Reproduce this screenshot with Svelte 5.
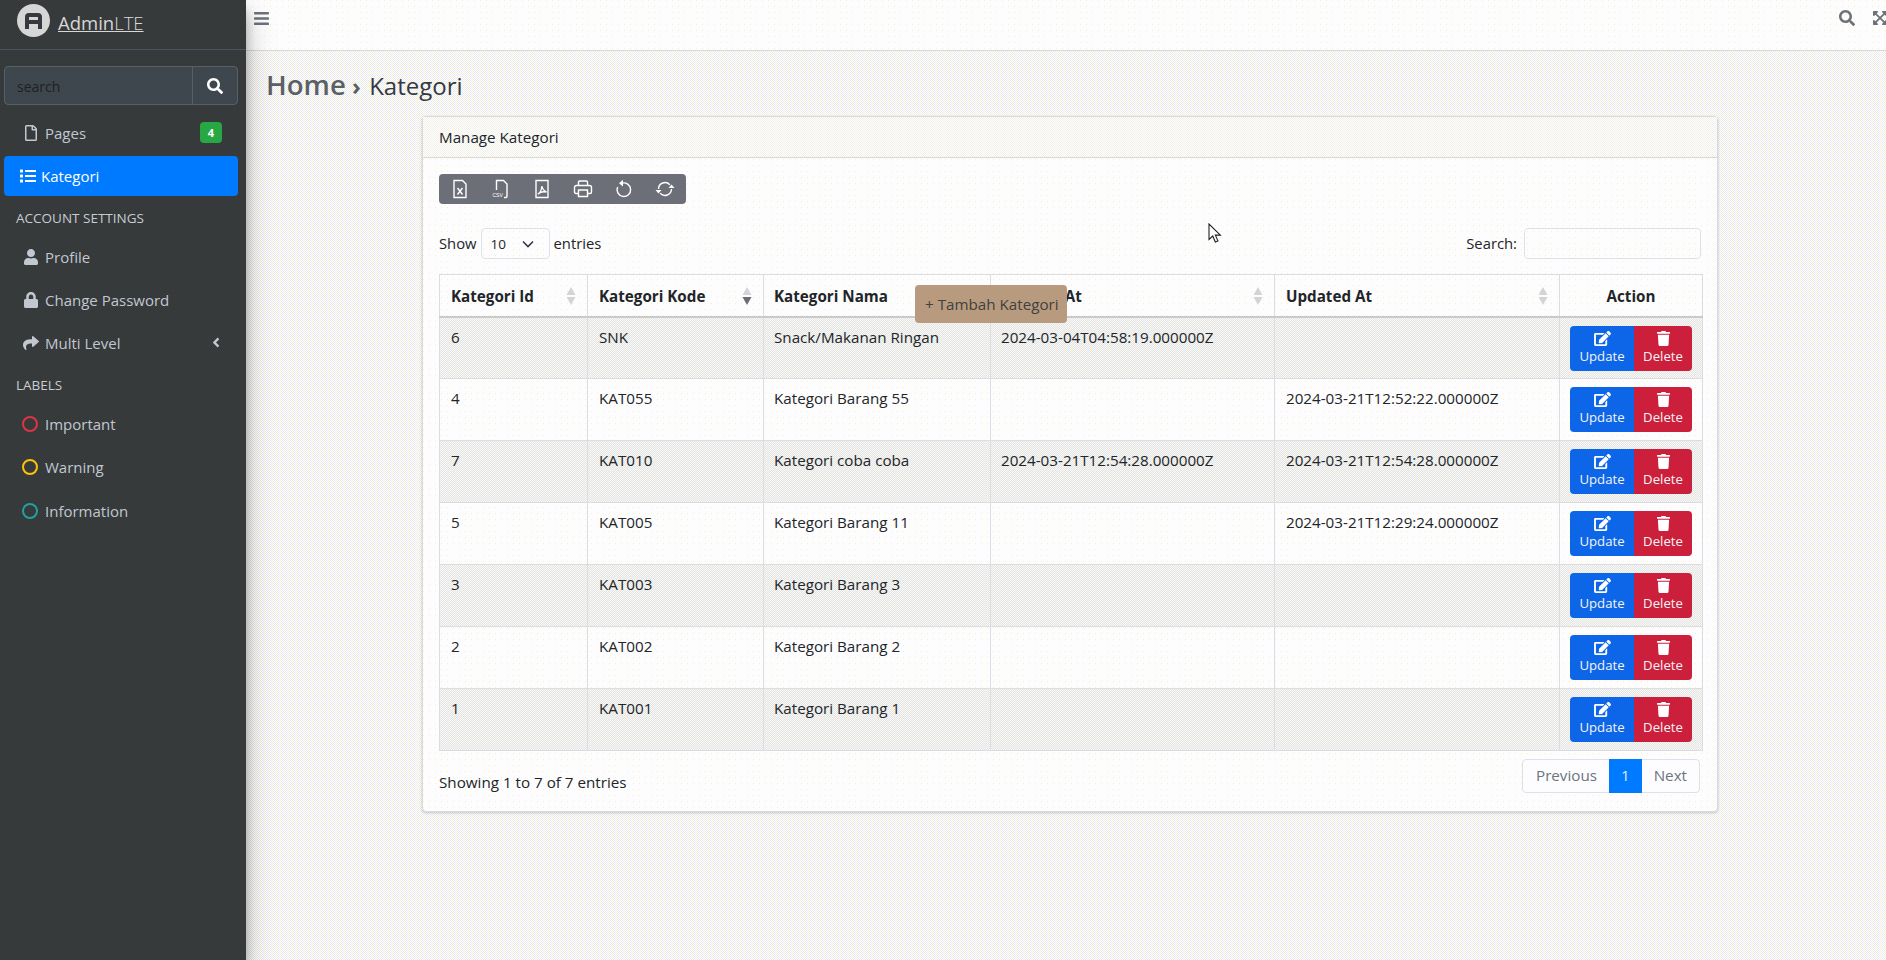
<script>
  const paths = {
    search: [512, 'M505 442.7L405.3 343c-4.5-4.5-10.6-7-17-7H372c27.6-35.3 44-79.7 44-128C416 93.1 322.9 0 208 0S0 93.1 0 208s93.1 208 208 208c48.3 0 92.7-16.4 128-44v16.3c0 6.4 2.5 12.5 7 17l99.7 99.7c9.4 9.4 24.6 9.4 33.9 0l28.3-28.3c9.4-9.4 9.4-24.6.1-34zM208 336c-70.7 0-128-57.2-128-128 0-70.7 57.2-128 128-128 70.7 0 128 57.2 128 128 0 70.7-57.2 128-128 128z'],
    bars: [448, 'M16 132h416c8.837 0 16-7.163 16-16V76c0-8.837-7.163-16-16-16H16C7.163 60 0 67.163 0 76v40c0 8.837 7.163 16 16 16zm0 160h416c8.837 0 16-7.163 16-16v-40c0-8.837-7.163-16-16-16H16c-8.837 0-16 7.163-16 16v40c0 8.837 7.163 16 16 16zm0 160h416c8.837 0 16-7.163 16-16v-40c0-8.837-7.163-16-16-16H16c-8.837 0-16 7.163-16 16v40c0 8.837 7.163 16 16 16z'],
    expand: [448, 'M448 344v112a23.94 23.94 0 0 1-24 24H312c-21.39 0-32.09-25.9-17-41l36.2-36.2L224 295.6 116.77 402.9 153 439c15.09 15.1 4.39 41-17 41H24a23.94 23.94 0 0 1-24-24V344c0-21.4 25.89-32.1 41-17l36.19 36.2L184.46 256 77.18 148.7 41 185c-15.1 15.1-41 4.4-41-17V56a23.94 23.94 0 0 1 24-24h112c21.39 0 32.09 25.9 17 41l-36.2 36.2L224 216.4l107.23-107.3L295 73c-15.09-15.1-4.39-41 17-41h112a23.94 23.94 0 0 1 24 24v112c0 21.4-25.89 32.1-41 17l-36.19-36.2L263.54 256l107.28 107.3L407 327.1c15.1-15.2 41-4.5 41 16.9z'],
    user: [448, 'M224 256c70.7 0 128-57.3 128-128S294.7 0 224 0 96 57.3 96 128s57.3 128 128 128zm89.6 32h-16.7c-22.2 10.2-46.9 16-72.9 16s-50.6-5.8-72.9-16h-16.7C60.2 288 0 348.2 0 422.4V464c0 26.5 21.5 48 48 48h352c26.5 0 48-21.5 48-48v-41.6c0-74.2-60.2-134.4-134.4-134.4z'],
    lock: [448, 'M400 224h-24v-72C376 68.2 307.8 0 224 0S72 68.2 72 152v72H48c-26.5 0-48 21.5-48 48v192c0 26.5 21.5 48 48 48h352c26.5 0 48-21.5 48-48V272c0-26.5-21.5-48-48-48zm-104 0H152v-72c0-39.7 32.3-72 72-72s72 32.3 72 72v72z'],
    share: [512, 'M503.691 189.836L327.687 37.851C312.281 24.546 288 35.347 288 56.015v80.053C127.371 137.907 0 170.1 0 322.326c0 61.441 39.581 122.309 83.333 154.132 13.653 9.931 33.111-2.533 28.077-18.631C66.066 312.814 132.917 274.316 288 272.085V360c0 20.7 24.3 31.453 39.687 18.164l176.004-152c11.071-9.562 11.086-26.753 0-36.328z'],
    angle: [256, 'M31.7 239l136-136c9.4-9.4 24.6-9.4 33.9 0l22.6 22.6c9.4 9.4 9.4 24.6 0 33.9L127.9 256l96.4 96.4c9.4 9.4 9.4 24.6 0 33.9L201.7 409c-9.4 9.4-24.6 9.4-33.9 0l-136-136c-9.5-9.4-9.5-24.6-.1-34z'],
    list: [512, 'M80 368H16a16 16 0 0 0-16 16v64a16 16 0 0 0 16 16h64a16 16 0 0 0 16-16v-64a16 16 0 0 0-16-16zm0-320H16A16 16 0 0 0 0 64v64a16 16 0 0 0 16 16h64a16 16 0 0 0 16-16V64a16 16 0 0 0-16-16zm0 160H16a16 16 0 0 0-16 16v64a16 16 0 0 0 16 16h64a16 16 0 0 0 16-16v-64a16 16 0 0 0-16-16zm416 176H176a16 16 0 0 0-16 16v32a16 16 0 0 0 16 16h320a16 16 0 0 0 16-16v-32a16 16 0 0 0-16-16zm0-320H176a16 16 0 0 0-16 16v32a16 16 0 0 0 16 16h320a16 16 0 0 0 16-16V80a16 16 0 0 0-16-16zm0 160H176a16 16 0 0 0-16 16v32a16 16 0 0 0 16 16h320a16 16 0 0 0 16-16v-32a16 16 0 0 0-16-16z'],
    trash: [448, 'M432 32H312l-9.4-18.7A24 24 0 0 0 281.1 0H166.8a23.72 23.72 0 0 0-21.4 13.3L136 32H16A16 16 0 0 0 0 48v32a16 16 0 0 0 16 16h416a16 16 0 0 0 16-16V48a16 16 0 0 0-16-16zM53.2 467a48 48 0 0 0 47.9 45h245.8a48 48 0 0 0 47.9-45L416 128H32z'],
    edit: [576, 'M402.6 83.2l90.2 90.2c3.8 3.8 3.8 10 0 13.8L274.4 405.6l-92.8 10.3c-12.4 1.4-22.9-9.1-21.5-21.5l10.3-92.8L388.8 83.2c3.8-3.8 10-3.8 13.8 0zm162-22.9l-48.8-48.8c-15.2-15.2-39.9-15.2-55.2 0l-35.4 35.4c-3.8 3.8-3.8 10 0 13.8l90.2 90.2c3.8 3.8 10 3.8 13.8 0l35.4-35.4c15.2-15.3 15.2-40 0-55.2zM384 346.2V448H64V128h229.8c3.2 0 6.2-1.3 8.5-3.5l40-40c7.6-7.6 2.2-20.5-8.5-20.5H48C21.5 64 0 85.5 0 112v352c0 26.5 21.5 48 48 48h352c26.5 0 48-21.5 48-48V306.2c0-10.7-12.9-16-20.5-8.5l-40 40c-2.2 2.3-3.5 5.3-3.5 8.5z'],
    file: [384, 'M369.9 97.9L286 14C277 5 264.8-.1 252.1-.1H48C21.5 0 0 21.5 0 48v416c0 26.5 21.5 48 48 48h288c26.5 0 48-21.5 48-48V131.9c0-12.7-5.1-25-14.1-34zM332.1 128H256V51.9l76.1 76.1zM48 464V48h160v104c0 13.3 10.7 24 24 24h104v288H48z']
  };

  const rows = [
    { id: 6, kode: 'SNK', nama: 'Snack/Makanan Ringan', created: '2024-03-04T04:58:19.000000Z', updated: '' },
    { id: 4, kode: 'KAT055', nama: 'Kategori Barang 55', created: '', updated: '2024-03-21T12:52:22.000000Z' },
    { id: 7, kode: 'KAT010', nama: 'Kategori coba coba', created: '2024-03-21T12:54:28.000000Z', updated: '2024-03-21T12:54:28.000000Z' },
    { id: 5, kode: 'KAT005', nama: 'Kategori Barang 11', created: '', updated: '2024-03-21T12:29:24.000000Z' },
    { id: 3, kode: 'KAT003', nama: 'Kategori Barang 3', created: '', updated: '' },
    { id: 2, kode: 'KAT002', nama: 'Kategori Barang 2', created: '', updated: '' },
    { id: 1, kode: 'KAT001', nama: 'Kategori Barang 1', created: '', updated: '' }
  ];

  const columns = [
    { label: 'Kategori Id' },
    { label: 'Kategori Kode', sorted: true },
    { label: 'Kategori Nama' },
    { label: 'Created At' },
    { label: 'Updated At' }
  ];
</script>

{#snippet fa(name, cls)}
  <svg class={cls} viewBox="0 0 {paths[name][0]} 512" aria-hidden="true"><path fill="currentColor" d={paths[name][1]} /></svg>
{/snippet}

{#snippet sortIcon(active)}
  <svg class="sort" class:active viewBox="0 0 10 18" aria-hidden="true">
    <path class="up" d="M5 0l4.500 8h-9z" />
    <path class="down" d="M5 18l-4.500-8h9z" />
  </svg>
{/snippet}

<div class="layout">
  <aside class="sidebar">
    <div class="brand">
      <svg class="logo" viewBox="0 0 33 33" aria-hidden="true">
        <circle cx="16.5" cy="16.5" r="16.5" fill="#d6d6d6" />
        <path fill="#343a40" fill-rule="evenodd" d="M12 9h9a4 4 0 0 1 4 4v12h-4v-5h-9v5H8V13a4 4 0 0 1 4-4zm0 4v3h9v-3z" />
      </svg>
      <span class="brand-text">Admin<span class="light">LTE</span></span>
    </div>

    <div class="side-search">
      <span class="side-placeholder">search</span>
      <span class="side-search-btn">{@render fa('search', 'ic-search')}</span>
    </div>

    <nav class="nav">
      <div class="item">
        {@render fa('file', 'ic')}<span>Pages</span><span class="badge">4</span>
      </div>
      <div class="item active">
        {@render fa('list', 'ic-list')}<span>Kategori</span>
      </div>
      <div class="nav-head">ACCOUNT SETTINGS</div>
      <div class="item">{@render fa('user', 'ic')}<span>Profile</span></div>
      <div class="item">{@render fa('lock', 'ic')}<span>Change Password</span></div>
      <div class="item">
        {@render fa('share', 'ic')}<span>Multi Level</span>{@render fa('angle', 'ic-angle')}
      </div>
      <div class="nav-head">LABELS</div>
      <div class="item"><i class="ring red"></i><span>Important</span></div>
      <div class="item"><i class="ring yellow"></i><span>Warning</span></div>
      <div class="item"><i class="ring teal"></i><span>Information</span></div>
    </nav>
  </aside>

  <div class="main">
    <header class="navbar">
      {@render fa('bars', 'ic-bars')}
      <div class="nav-right">
        {@render fa('search', 'ic-top')}
        {@render fa('expand', 'ic-top')}
      </div>
    </header>

    <div class="content">
      <h1 class="title"><span class="home">Home</span> <span class="chev">›</span> <span class="page">Kategori</span></h1>

      <section class="card">
        <div class="card-head">Manage Kategori</div>
        <div class="card-body">
          <div class="toolbar">
            <svg viewBox="0 0 20 20" class="tool" aria-hidden="true">
              <path d="M4 1.500h8.500l3.500 3.500v13.500H4z" /><path d="M7.500 9l5 6.500M12.500 9l-5 6.500" />
            </svg>
            <svg viewBox="0 0 20 20" class="tool" aria-hidden="true">
              <path d="M5.500 11V1.500h7l3.500 3.500v12.500a1 1 0 0 1-1 1h-2" />
              <text x="1.500" y="18" class="tool-text">CSV</text>
            </svg>
            <svg viewBox="0 0 20 20" class="tool" aria-hidden="true">
              <path d="M4 1.500h12v17H4z" /><path d="M6 15c2-1 3.500-4 4-8 .5 3 2 5 4.500 6-2.500-.5-6-.5-8.500 2z" />
            </svg>
            <svg viewBox="0 0 20 20" class="tool" aria-hidden="true">
              <path d="M5.500 6.500V3a1 1 0 0 1 1-1h7a1 1 0 0 1 1 1v3.500M5 14.500H3a1.500 1.500 0 0 1-1.500-1.500V8.500A2 2 0 0 1 3.500 6.500h13a2 2 0 0 1 2 2V13a1.500 1.500 0 0 1-1.500 1.500h-2" /><path d="M5.500 11h9v6.500h-9z" />
            </svg>
            <svg viewBox="0 0 20 20" class="tool" aria-hidden="true">
              <path d="M7.800 4.200A6.800 6.800 0 1 1 3.600 8" /><path fill="#fff" stroke="none" d="M9 .8v6.800L5 4.200z" />
            </svg>
            <svg viewBox="0 0 20 20" class="tool" aria-hidden="true">
              <path d="M3.500 10a6.500 6.500 0 0 1 11.300-4.300M16.500 10a6.500 6.500 0 0 1-11.300 4.300" />
              <path fill="#fff" stroke="none" d="M19.500 9h-6l3-3.600zM.5 11h6l-3 3.600z" />
            </svg>
          </div>

          <div class="table-top">
            <div class="length">
              <span class="lbl">Show</span>
              <span class="select">10<svg viewBox="0 0 12 8" class="caret" aria-hidden="true"><path d="M1 1.500l5 5 5-5" /></svg></span>
              <span class="lbl">entries</span>
            </div>
            <div class="filter">
              <span class="lbl">Search:</span>
              <span class="input"></span>
            </div>
          </div>

          <table>
            <thead>
              <tr>
                {#each columns as col}
                  <th><span class="th-in">{col.label}{@render sortIcon(col.sorted)}</span></th>
                {/each}
                <th class="action-head">Action</th>
              </tr>
            </thead>
            <tbody>
              {#each rows as row}
                <tr>
                  <td>{row.id}</td>
                  <td>{row.kode}</td>
                  <td>{row.nama}</td>
                  <td>{row.created}</td>
                  <td>{row.updated}</td>
                  <td class="actions">
                    <div class="btn-group">
                      <span class="btn blue">{@render fa('edit', 'ic-btn')}<span>Update</span></span>
                      <span class="btn red-btn">{@render fa('trash', 'ic-btn')}<span>Delete</span></span>
                    </div>
                  </td>
                </tr>
              {/each}
            </tbody>
          </table>

          <div class="table-foot">
            <span>Showing 1 to 7 of 7 entries</span>
            <div class="pager">
              <span class="pg first">Previous</span>
              <span class="pg current">1</span>
              <span class="pg">Next</span>
            </div>
          </div>
        </div>
      </section>
    </div>
  </div>

  <span class="tambah">+ Tambah Kategori</span>
  <svg class="cursor" viewBox="0 0 14 22" aria-hidden="true">
    <path fill="#fff" stroke="#222" stroke-width="1.100" d="M1 1v15.500l3.800-3.500 2.500 6 2.600-1.100-2.500-5.800h5z" />
  </svg>
</div>

<style>
  :global(body) {
    margin: 0;
    font-family: "Open Sans", "Liberation Sans", sans-serif;
    font-size: 15px;
    color: #212529;
    overflow: hidden;
  }

  .layout {
    position: relative;
    display: flex;
    height: 960px;
    /* the reference is a dithered gif frame, so the flats carry a fine grain */
    background:
      conic-gradient(at 1px 1px, transparent 75%, #fff3a6 0) 0 0 / 4px 4px,
      repeating-conic-gradient(#ffffff 0 25%, #e9e9f0 0 50%) 0 0 / 2px 2px;
  }

  .sidebar {
    width: 246px;
    flex-shrink: 0;
    background: repeating-conic-gradient(#2f3a30 0 25%, #3d3a46 0 50%) 0 0 / 2px 2px;
    box-shadow: 0 14px 28px rgba(0, 0, 0, 0.25), 0 10px 10px rgba(0, 0, 0, 0.22);
    color: #c2c7d0;
    z-index: 1;
  }

  .brand {
    display: flex;
    align-items: center;
    gap: 8px;
    height: 50px;
    padding: 0 0 0 17px;
    box-sizing: border-box;
    border-bottom: 1px solid #4b545c;
    margin-bottom: 16px;
  }

  .logo {
    width: 33px;
    height: 33px;
    margin-top: -9px;
  }

  .brand-text {
    font-size: 18.5px;
    color: #d8d8d8;
    text-decoration: underline;
    margin-top: -4px;
  }

  .light {
    font-weight: 300;
  }

  .side-search {
    display: flex;
    height: 39px;
    margin: 0 8px 8px 4px;
    background: #3f474e;
    border: 1px solid #56606a;
    border-radius: 4px;
    box-sizing: border-box;
  }

  .side-placeholder {
    flex: 1;
    padding: 10px 12px 8px;
    font-size: 14px;
    color: #1e2124;
    line-height: 20px;
  }

  .side-search-btn {
    width: 44px;
    display: flex;
    align-items: center;
    justify-content: center;
    border-left: 1px solid #56606a;
    color: #fff;
  }

  .ic-search {
    width: 16px;
    height: 16px;
  }

  .nav {
    display: flex;
    flex-direction: column;
    gap: 2px;
    margin: 0 8px 0 4px;
  }

  .item {
    display: flex;
    align-items: center;
    height: 41px;
    padding: 0 16px 0 18px;
    border-radius: 4px;
    font-size: 15px;
    color: #c2c7d0;
  }

  .item:first-child {
    height: 39px;
    margin-bottom: 2px;
  }

  .item:last-child {
    margin-top: 1px;
  }

  .item.active {
    height: 40px;
    padding-left: 16px;
    background: #007bff;
    color: #fff;
  }

  .ic {
    width: 18px;
    height: 16px;
    margin-right: 5px;
    flex-shrink: 0;
  }

  .ic-list {
    width: 16px;
    height: 16px;
    margin-right: 5px;
  }

  .badge {
    margin-left: auto;
    width: 22px;
    height: 21px;
    background: #28a745;
    border-radius: 4px;
    color: #fff;
    font-size: 11px;
    font-weight: 700;
    line-height: 21px;
    text-align: center;
  }

  .ic-angle {
    margin-left: auto;
    width: 10px;
    height: 15px;
    margin-right: 1px;
  }

  .nav-head {
    padding: 11px 12px 6px;
    font-size: 13.5px;
    line-height: 19px;
    color: #c8ccd2;
  }

  .ring {
    width: 16px;
    height: 16px;
    border: 2px solid;
    border-radius: 50%;
    box-sizing: border-box;
    margin-right: 7px;
    flex-shrink: 0;
  }

  .red { color: #dc3545; }
  .yellow { color: #ffc107; }
  .teal { color: #20a0a0; }

  .main {
    flex: 1;
    min-width: 0;
  }

  .navbar {
    display: flex;
    align-items: flex-start;
    justify-content: space-between;
    height: 51px;
    box-sizing: border-box;
    padding: 10px 0 0 8px;
    background:
      conic-gradient(at 1px 1px, transparent 75%, #fff3a6 0) 0 0 / 6px 6px,
      #fdfdff;
    border-bottom: 1px solid #d6d8dc;
    color: #6d7276;
  }

  .ic-bars {
    width: 15px;
    height: 17px;
  }

  .nav-right {
    display: flex;
    gap: 17px;
    margin-right: -2px;
    color: #6d7276;
  }

  .ic-top {
    width: 16px;
    height: 16px;
  }

  .title {
    margin: 0;
    padding: 13px 0 0 20px;
    height: 52px;
    font-weight: 400;
    font-size: 24px;
    line-height: 40px;
    color: #343a40;
  }

  .home {
    font-size: 27.6px;
    font-weight: 600;
    color: #5a6066;
  }

  .chev {
    color: #5a6066;
    font-weight: 700;
    margin-right: 2px;
  }

  .card {
    width: 1296px;
    margin: 0 0 0 176px;
    box-sizing: border-box;
    background:
      conic-gradient(at 1px 1px, transparent 75%, #fff3a6 0) 0 0 / 6px 6px,
      #fdfdff;
    border: 1px solid #d8dae0;
    border-radius: 4px;
    box-shadow: 0 1px 3px rgba(0, 0, 0, 0.2);
  }

  .card-head {
    height: 41px;
    box-sizing: border-box;
    padding: 0 16px;
    line-height: 40px;
    font-size: 15.2px;
    background: repeating-conic-gradient(#ffffff 0 25%, #f0f0e8 0 50%) 0 0 / 2px 2px;
    border-bottom: 1px solid #d5d6d8;
  }

  .card-body {
    padding: 16px 16px 0;
  }

  .toolbar {
    display: flex;
    align-items: center;
    gap: 21px;
    width: 247px;
    height: 30px;
    padding-left: 11px;
    box-sizing: border-box;
    background: #6c6f78;
    border-radius: 4px;
  }

  .tool {
    width: 20px;
    height: 20px;
    flex-shrink: 0;
    fill: none;
    stroke: #fff;
    stroke-width: 1.400;
  }

  .tool-text {
    font-size: 5px;
    fill: #fff;
    stroke: none;
    font-family: "Liberation Sans", sans-serif;
  }

  .table-top {
    display: flex;
    align-items: center;
    justify-content: space-between;
    margin: 24px 0 15px;
  }

  .length, .filter {
    display: flex;
    align-items: center;
    gap: 4px;
    font-size: 14.8px;
  }

  .filter {
    gap: 7px;
  }

  .lbl {
    padding-bottom: 2px;
  }

  .select {
    display: flex;
    align-items: center;
    justify-content: space-between;
    width: 69px;
    height: 31px;
    padding: 0 15px 0 9px;
    box-sizing: border-box;
    border: 1px solid #dee2e6;
    border-radius: 4px;
    font-size: 13.5px;
  }

  .caret {
    width: 12px;
    height: 8px;
    fill: none;
    stroke: #343a40;
    stroke-width: 1.600;
  }

  .input {
    width: 177px;
    height: 31px;
    box-sizing: border-box;
    border: 1px solid #dee2e6;
    border-radius: 4px;
  }

  table {
    width: 1263px;
    table-layout: fixed;
    border-collapse: collapse;
    font-size: 15.2px;
  }

  th, td {
    border: 1px solid #dcdde2;
    text-align: left;
    vertical-align: top;
  }

  th:nth-child(1) { width: 148px; }
  th:nth-child(2) { width: 176px; }
  th:nth-child(3) { width: 227px; }
  th:nth-child(4) { width: 284px; }
  th:nth-child(5) { width: 285px; }
  th:nth-child(6) { width: 143px; }

  th {
    height: 42px;
    padding: 1px 11px 0;
    box-sizing: border-box;
    font-weight: 700;
    vertical-align: middle;
    border-bottom: 2px solid #c8cacc;
  }

  th:nth-child(3), th:nth-child(4), td:nth-child(3), td:nth-child(4) {
    padding-left: 10px;
  }

  .th-in {
    display: flex;
    align-items: center;
    justify-content: space-between;
  }

  .action-head {
    text-align: center;
  }

  td {
    height: 62px;
    box-sizing: border-box;
    padding: 9px 11px 0;
  }

  tbody tr:nth-child(odd) {
    background: repeating-conic-gradient(#f8f8f4 0 25%, #e4e4e4 0 50%) 0 0 / 2px 2px;
  }

  .sort {
    width: 10px;
    height: 18px;
    flex-shrink: 0;
  }

  .sort path {
    fill: #d4d4d4;
  }

  .sort.active .down {
    fill: #6a6e72;
  }

  td.actions {
    padding: 8px 0 0 10px;
  }

  .btn-group {
    display: flex;
    width: 122px;
    height: 45px;
    border-radius: 4px;
    overflow: hidden;
    color: #f4f4f4;
    font-size: 13.2px;
  }

  .btn {
    display: flex;
    flex-direction: column;
    align-items: center;
    padding-top: 3px;
    box-sizing: border-box;
    line-height: 16px;
  }

  .blue {
    width: 64px;
    background: #0d66e8;
  }

  .red-btn {
    width: 58px;
    background: #cc1f3c;
  }

  .ic-btn {
    height: 15px;
    width: 17px;
    margin-top: 2px;
    margin-bottom: 2px;
    color: #fff;
  }

  .table-foot {
    display: flex;
    justify-content: space-between;
    align-items: flex-start;
    padding: 8px 1px 18px 0;
    font-size: 15.2px;
  }

  .table-foot > span {
    padding-top: 13px;
  }

  .pager {
    display: flex;
    height: 34px;
    border: 1px solid #dee2e6;
    border-radius: 4px;
    box-sizing: border-box;
    color: #6c757d;
    background: #fdfdff;
  }

  .pg {
    padding: 0 12px;
    line-height: 31px;
  }

  .pg.first {
    padding-left: 13px;
  }

  .pg.current {
    margin: -1px 0;
    line-height: 33px;
    background: #007bff;
    color: #d8f0ff;
  }

  .tambah {
    position: absolute;
    left: 915px;
    top: 285px;
    width: 152px;
    height: 38px;
    box-sizing: border-box;
    padding-left: 10px;
    line-height: 39px;
    background: #b89b7e;
    border-radius: 4px;
    color: #40403e;
    font-size: 15.2px;
  }

  .cursor {
    position: absolute;
    left: 1208px;
    top: 223px;
    width: 14px;
    height: 22px;
  }
</style>
